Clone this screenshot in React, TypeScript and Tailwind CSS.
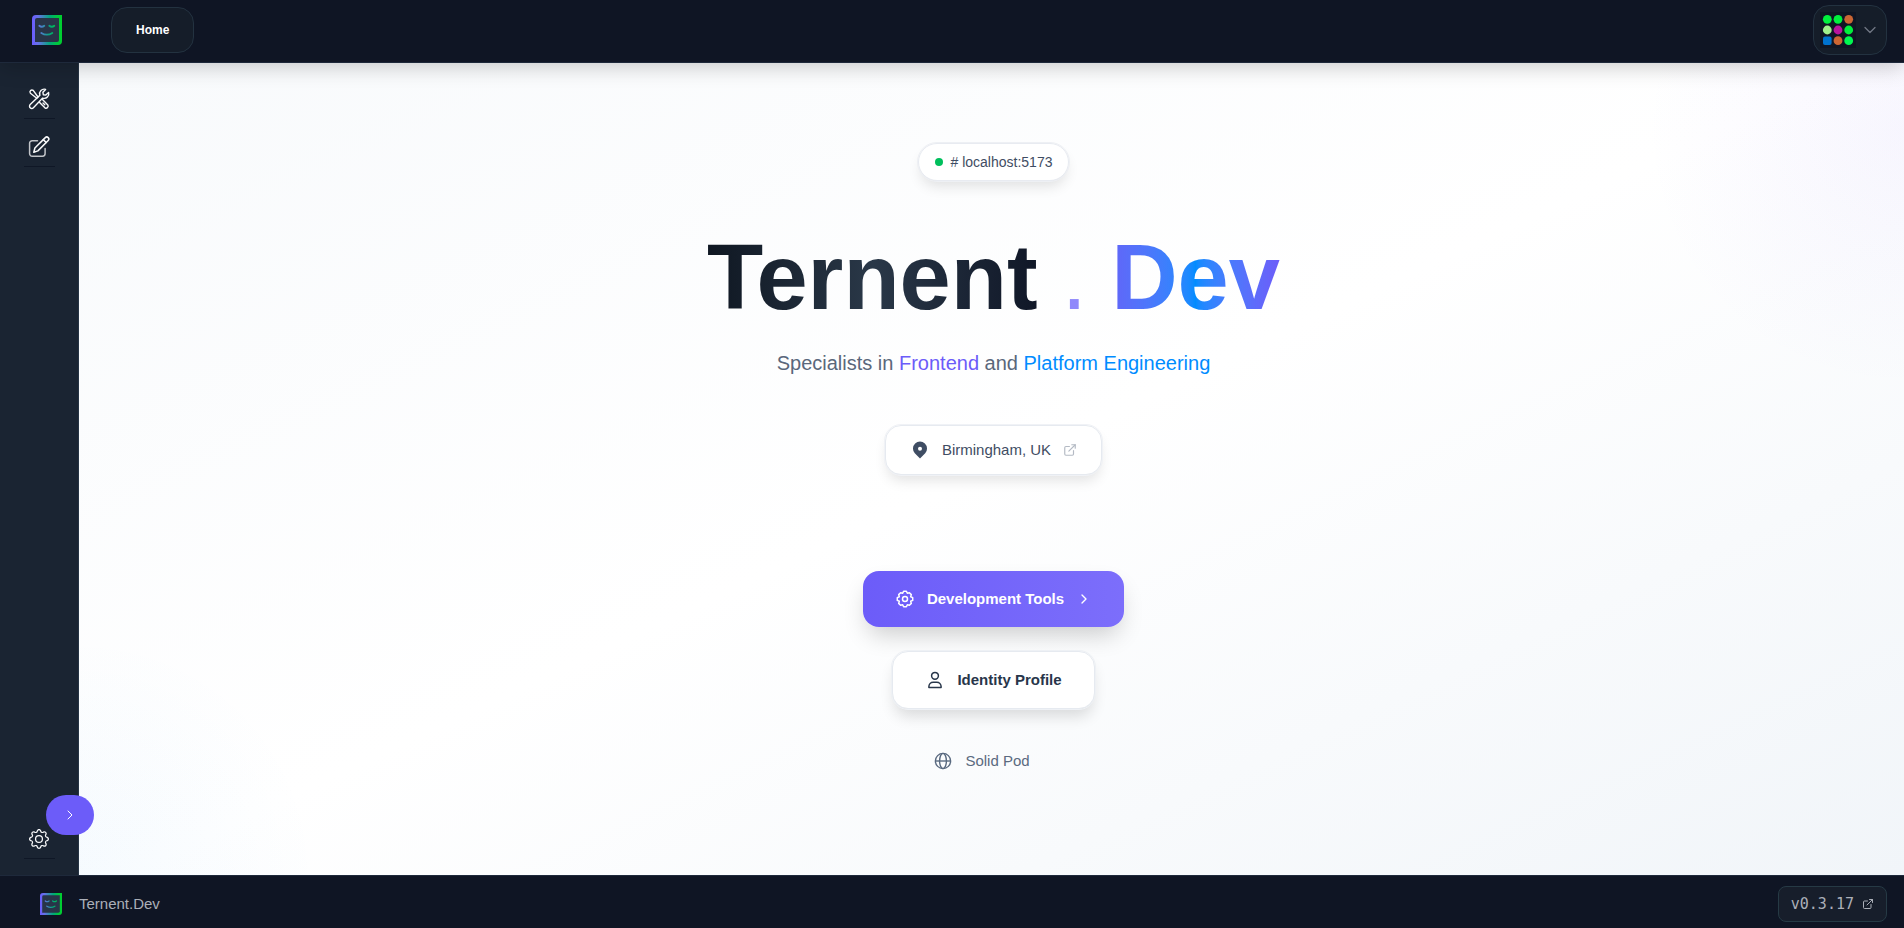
import React from "react";
import { BsGear } from "react-icons/bs";
import { ChevronDown, ChevronRight, ExternalLink } from "lucide-react";

function Logo({ className, id }: { className: string; id: string }) {
  return (
    <svg viewBox="0 0 30 30" className={className} aria-hidden="true">
      <defs>
        <linearGradient id={id} x1="0" y1="0" x2="30" y2="0" gradientUnits="userSpaceOnUse">
          <stop offset="0" stopColor="#6b5cff" />
          <stop offset="0.2" stopColor="#6670e8" />
          <stop offset="0.6" stopColor="#00a878" />
          <stop offset="0.85" stopColor="#00c93c" />
          <stop offset="1" stopColor="#00cf2d" />
        </linearGradient>
      </defs>
      <path d="M4 0H30V26a4 4 0 0 1-4 4H0V4A4 4 0 0 1 4 0Z" fill={`url(#${id})`} />
      <path d="M5 3H27V25a2 2 0 0 1-2 2H3V5A2 2 0 0 1 5 3Z" fill="#283548" />
      <g fill="none" stroke={`url(#${id})`} strokeWidth="1.8" strokeLinecap="round">
        <path d="M7.3 10.8q2.5 2 5 0" />
        <path d="M17.3 10.8q2.5 2 5 0" />
        <path d="M9.3 18q5.5 3.4 11 0" />
      </g>
    </svg>
  );
}

function ToolsIcon() {
  return (
    <svg viewBox="0 0 24 24" className="size-6" fill="none" stroke="currentColor" strokeWidth="1.4" strokeLinecap="round" strokeLinejoin="round" aria-hidden="true">
      <path d="M21.6 5.4L18.8 8.1L16.3 7.7L15.9 5.2L18.6 2.4A4.6 4.6 0 0 0 12.9 8.3L3.2 17.6A2.2 2.2 0 0 0 6.4 20.8L15.7 11.1A4.6 4.6 0 0 0 21.6 5.4Z" />
      <path d="M11 10L6.2 3.4A2 2 0 0 0 3.4 6.2L9.8 11.2" />
      <path d="M15.5 12.6L20.8 17.9A2.1 2.1 0 0 1 17.9 20.8L12.6 15.5" />
      <path d="M16 16l1.8 1.8" />
    </svg>
  );
}

function EditIcon() {
  return (
    <svg viewBox="0 0 24 24" className="size-6" fill="none" stroke="currentColor" strokeWidth="1.5" strokeLinecap="round" strokeLinejoin="round" aria-hidden="true">
      <path opacity="0.75" d="M10.5 5.7H5.2A2.6 2.6 0 0 0 2.6 8.3V18.6A2.6 2.6 0 0 0 5.2 21.2H15.5A2.6 2.6 0 0 0 18.1 18.6V13.5" />
      <path d="M6.8 17.2L7.9 13L18.3 2.6A2 2 0 0 1 21.2 5.5L10.9 15.9Z" />
      <path d="M16.3 4.6L19.2 7.5" />
    </svg>
  );
}

function CogIcon() {
  return (
    <svg viewBox="0 0 20 20" className="size-5" fill="none" stroke="currentColor" strokeWidth="1.5" strokeLinejoin="round" aria-hidden="true">
      <path d="M8.6 2.3H11.4L12.3 4.3L14.4 3.7L16.3 5.6L15.7 7.7L17.7 8.6V11.4L15.7 12.3L16.3 14.4L14.4 16.3L12.3 15.7L11.4 17.7H8.6L7.7 15.7L5.6 16.3L3.7 14.4L4.3 12.3L2.3 11.4V8.6L4.3 7.7L3.7 5.6L5.6 3.7L7.7 4.3Z" />
      <circle cx="10" cy="10" r="2.5" />
    </svg>
  );
}

function PinIcon() {
  return (
    <svg viewBox="0 0 20 20" className="size-5" fill="currentColor" aria-hidden="true">
      <path fillRule="evenodd" d="M10 18.5L4.8 13.3A7 7 0 1 1 15.2 13.3ZM10 6.7a2 2 0 1 0 0 4a2 2 0 0 0 0-4Z" />
    </svg>
  );
}

function UserIcon() {
  return (
    <svg viewBox="0 0 20 20" className="size-5" fill="none" stroke="currentColor" strokeWidth="1.5" strokeLinejoin="round" aria-hidden="true">
      <circle cx="10" cy="5.8" r="3.4" />
      <path d="M3.9 17.5V16.5A4.3 4.3 0 0 1 8.2 12.2H11.8A4.3 4.3 0 0 1 16.1 16.5V17.5Z" />
    </svg>
  );
}

function GlobeIcon() {
  return (
    <svg viewBox="0 0 20 20" className="size-5" fill="none" stroke="currentColor" strokeWidth="1.4" aria-hidden="true">
      <circle cx="10" cy="10" r="7.6" />
      <ellipse cx="10" cy="10" rx="3.4" ry="7.6" />
      <path d="M2.4 10H17.6" />
    </svg>
  );
}

function Avatar() {
  const dots = ["#00f03c", "#00f03c", "#cc6633", "#a0f08c", "#b8149c", "#00f03c", "#0072ce", "#cc6633", "#00f850"];
  return (
    <svg viewBox="0 0 36 36" className="size-9" aria-hidden="true">
      <rect width="36" height="36" fill="#101624" />
      {dots.map((fill, i) => {
        const cx = 7.3 + (i % 3) * 10.7;
        const cy = 7.3 + Math.floor(i / 3) * 10.7;
        return i === 6 ? (
          <rect key={i} x={cx - 4.3} y={cy - 4.3} width="8.6" height="8.6" rx="2" fill={fill} />
        ) : (
          <circle key={i} cx={cx} cy={cy} r="4.4" fill={fill} />
        );
      })}
    </svg>
  );
}

function SideItem({ label, children }: { label: string; children: React.ReactNode }) {
  return (
    <a href="#" aria-label={label} className="flex h-12 w-[31px] items-center justify-center border-b border-[#0f1726] pt-3 pb-1 text-gray-50">
      {children}
    </a>
  );
}

export default function App() {
  return (
    <div className="flex min-h-screen flex-col bg-[#0f1524] font-['Liberation_Sans',Arial,sans-serif] text-[15px] leading-6">
      <header className="relative z-10 flex h-[63px] items-center border-b border-[#1e293b] bg-[#0f1524] pr-[17px] pb-0.5 pl-8 shadow-[0_4px_20px_rgba(0,0,0,0.2)]">
        <a href="#" aria-label="Ternent.Dev home">
          <Logo id="header-logo" className="size-[30px]" />
        </a>
        <nav className="ml-[49px]">
          <a href="#" className="flex h-[46px] items-center rounded-2xl border border-[#233240] bg-[#151d29] px-6 text-xs font-bold text-white">
            Home
          </a>
        </nav>
        <button type="button" aria-label="Account menu" className="ml-auto flex h-[50px] items-center gap-1 rounded-2xl border border-[#233240] bg-[#151d29] px-1.5 text-[#717784]">
          <Avatar />
          <ChevronDown className="size-5" strokeWidth={1.5} />
        </button>
      </header>

      <div className="flex flex-1">
        <aside className="relative flex w-[79px] shrink-0 flex-col items-center border-r border-[#263445] bg-[#1a2432] pt-2 pb-4">
          <SideItem label="Tools">
            <ToolsIcon />
          </SideItem>
          <SideItem label="Write">
            <EditIcon />
          </SideItem>
          <div className="mt-auto">
            <SideItem label="Settings">
              <BsGear size={20} />
            </SideItem>
          </div>
          <button type="button" aria-label="Expand sidebar" className="absolute -right-4 bottom-10 z-10 flex h-10 w-12 items-center justify-center rounded-[20px] bg-[#6c5cf9] text-white">
            <ChevronRight className="size-4" strokeWidth={1.5} />
          </button>
        </aside>

        <main className="flex flex-1 flex-col items-center bg-[radial-gradient(circle_at_100%_8%,rgba(124,92,250,0.05),transparent_260px),radial-gradient(circle_at_0%_100%,rgba(14,140,240,0.04),transparent_240px),linear-gradient(155deg,#f8fafc_0%,#ffffff_50%,#f1f5f9_100%)] pt-20 pb-20 pl-1">
          <div className="flex items-center gap-2 rounded-full border border-[#e8ebf1] bg-white px-4 py-1.5 text-sm leading-6 text-[#3f4d63] shadow-[0_8px_14px_-3px_rgba(0,0,0,0.12)] outline outline-[#eef0f4]">
            <span className="size-2 rounded-full bg-[#00bf5c]" />
            <span># localhost:5173</span>
          </div>

          <h1 className="mt-12 flex items-baseline text-[92px] leading-[96px] font-bold">
            <span className="bg-linear-to-r from-[#0f1722] via-[#2a3848] to-[#101727] bg-clip-text text-transparent">Ternent</span>
            <span className="mr-6 ml-6 font-normal text-[#9088fb]">.</span>
            <span className="bg-linear-to-r from-[#6165f8] via-[#008cff] to-[#6c5cf9] bg-clip-text text-transparent">Dev</span>
          </h1>

          <p className="mt-6 text-xl leading-7 text-[#5a677b]">
            Specialists in <span className="text-[#6c5cf9]">Frontend</span> and <span className="text-[#008cff]">Platform Engineering</span>
          </p>

          <a href="#" className="mt-12 flex items-center gap-3 rounded-2xl border border-[#e6eaf0] bg-white px-6 py-3 text-[#3f4d63] shadow-[0_8px_14px_-3px_rgba(0,0,0,0.12)] outline outline-[#f0f2f6]">
            <PinIcon />
            Birmingham, UK
            <ExternalLink className="size-3.5 text-[#b4bac4]" />
          </a>

          <button type="button" className="mt-24 flex h-14 items-center gap-3 rounded-2xl bg-linear-to-r from-[#6c5cf9] to-[#7c6efb] px-8 font-bold text-white shadow-[0_12px_24px_-5px_rgba(0,0,0,0.2)]">
            <CogIcon />
            Development Tools
            <ChevronRight className="size-4" />
          </button>

          <button type="button" className="mt-6 flex h-[58px] items-center gap-3 rounded-2xl border border-[#e6eaf0] bg-white px-8 font-bold text-[#28364a] shadow-[0_10px_15px_-3px_rgba(0,0,0,0.14)] outline outline-[#eef1f5]">
            <UserIcon />
            Identity Profile
          </button>

          <button type="button" className="group mt-8 flex h-10 items-center gap-3 px-6 text-[#5a6a80]">
            <GlobeIcon />
            Solid Pod
            <ChevronRight className="size-3 opacity-0 group-hover:opacity-100" />
          </button>
        </main>
      </div>

      <footer className="flex h-[53px] items-center border-t border-[#1e293b] bg-[#0f1524] pt-1 pr-[17px] pl-10">
        <Logo id="footer-logo" className="size-[22px]" />
        <span className="ml-[17px] text-[#abafb8]">Ternent.Dev</span>
        <a href="#" className="ml-auto flex h-9 items-center gap-2 rounded-lg border border-[#263a45] bg-[#171e2b] px-3 font-['DejaVu_Sans_Mono',monospace] text-[#abafb8]">
          v0.3.17
          <ExternalLink className="size-3" />
        </a>
      </footer>
    </div>
  );
}
